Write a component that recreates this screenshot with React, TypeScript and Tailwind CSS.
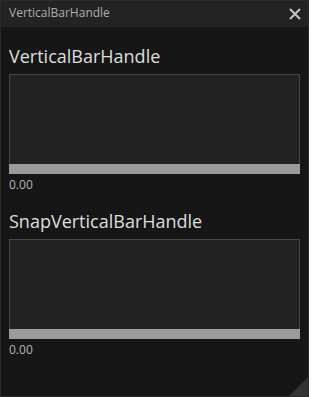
import React from "react";

function Slider({ label }: { label: string }) {
  return (
    <div className="flex flex-col">
      <div className="text-[18px] leading-[24px] text-[#dedede]">{label}</div>
      <div className="mt-[6px] flex h-[100px] flex-col">
        <div className="flex-1 border border-b-0 border-[#464646] bg-[#222222]" />
        <div className="h-[10px] bg-[#9b9b9b]" />
      </div>
      <div className="mt-[3px] text-[12px] leading-[16px] text-[#b4b4b4]">0.00</div>
    </div>
  );
}

export default function App() {
  return (
    <div
      className="relative flex h-[397px] w-[309px] flex-col border border-[#2b2b2b] bg-[#161616]"
      style={{ fontFamily: '"Open Sans", "Noto Sans", sans-serif' }}
    >
      <div className="flex h-[26px] items-start justify-between bg-[#232323] pl-[8px] pr-[7px] pt-[4px]">
        <span className="text-[12px] leading-[16px] text-[#aeaeae]">VerticalBarHandle</span>
        <svg width="12" height="12" viewBox="0 0 12 12" className="mt-[3px]">
          <path d="M1 1 L11 11 M11 1 L1 11" stroke="#c4c4c4" strokeWidth="2" />
        </svg>
      </div>
      <div className="flex flex-col gap-[16px] px-[8px] pt-[17px]">
        <Slider label="VerticalBarHandle" />
        <Slider label="SnapVerticalBarHandle" />
      </div>
      <svg
        width="19"
        height="19"
        viewBox="0 0 19 19"
        className="absolute bottom-0 right-0"
      >
        <polygon points="19,0 19,19 0,19" fill="#333333" />
      </svg>
    </div>
  );
}
